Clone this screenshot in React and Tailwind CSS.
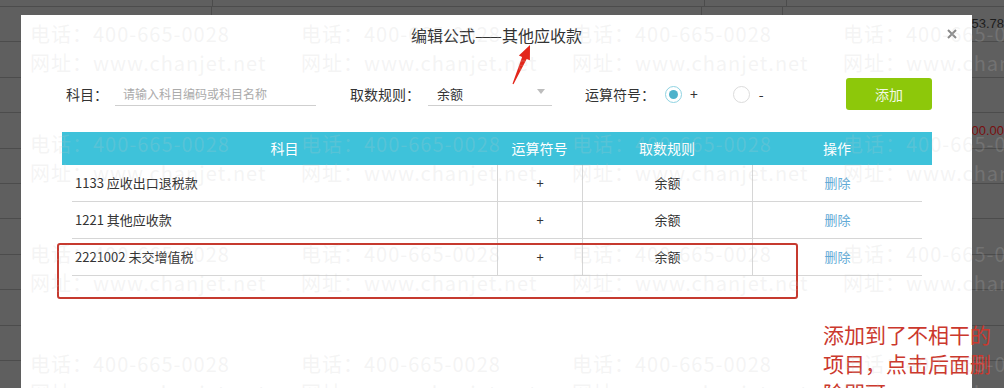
import React from 'react';

const rows = [
  { code: '1133 应收出口退税款', op: '+', rule: '余额' },
  { code: '1221 其他应收款', op: '+', rule: '余额' },
  { code: '2221002 未交增值税', op: '+', rule: '余额' },
];

const sheetRows = Array.from({ length: 11 });

function Sheet() {
  return (
    <div className="flex flex-col">
      <div className="flex h-[7px] border-b border-[#4c4c4c]">
        <div className="w-[213px] border-r border-[#4c4c4c]" />
        <div className="w-[492px] border-r border-[#4c4c4c]" />
        <div className="w-[82px] border-r border-[#4c4c4c]" />
        <div className="flex-1" />
      </div>
      {sheetRows.map((_, i) => (
        <div key={i} className="flex h-[35.4px] border-b border-[#4c4c4c] font-['Liberation_Sans',sans-serif] text-[13px]">
          <div className="w-[213px] border-r border-[#4c4c4c]" />
          <div className="w-[492px] border-r border-[#4c4c4c]" />
          <div className="w-[82px] border-r border-[#4c4c4c]" />
          <div className="flex flex-1 items-center whitespace-nowrap">
            {i === 0 && <span className="pl-[181px] text-[#1c1c1c]">453.78</span>}
            {i === 3 && <span className="pl-[186px] text-[#7a0f0f]">000.00</span>}
          </div>
        </div>
      ))}
    </div>
  );
}

function Radio({ checked }) {
  return (
    <span className={`flex h-[17px] w-[17px] items-center justify-center rounded-full border ${checked ? 'border-[#8fd3e2]' : 'border-[#dcdcdc]'}`}>
      {checked && <span className="h-[9px] w-[9px] rounded-full bg-[#4fb2cb]" />}
    </span>
  );
}

function Watermark() {
  const cells = Array.from({ length: 16 });
  return (
    <div className="pointer-events-none absolute inset-0 grid auto-rows-[110px] grid-cols-[repeat(4,271px)] pl-[30px] pt-[19px] text-[20px] leading-[29px] tracking-[1px] whitespace-nowrap text-[rgba(200,200,200,0.2)]">
      {cells.map((_, i) => (
        <div key={i}>
          <div>电话：400-665-0028</div>
          <div>网址：www.chanjet.net</div>
        </div>
      ))}
    </div>
  );
}

export default function App() {
  return (
    <div className="relative h-[388px] w-[1004px] overflow-hidden bg-[#5f5f5f] font-['Noto_Sans_CJK_SC',sans-serif]">
      <Sheet />

      <div className="absolute left-[21px] top-[15px] h-[380px] w-[951px] bg-white">
        <div className="relative flex h-[40px] items-center justify-center text-[16px] text-[#333]">
          编辑公式——其他应收款
          <button className="absolute right-[15px] top-[14px]">
            <svg width="10" height="10" viewBox="0 0 10 10">
              <path d="M1 1L9 9M9 1L1 9" stroke="#8a8a8a" strokeWidth="2" />
            </svg>
          </button>
        </div>

        <div className="mt-[23px] flex h-[32px] items-center pl-[45px] pr-[40px] text-[14px] text-[#333]">
          <span className="w-[49px]">科目：</span>
          <div className="flex h-[24px] w-[201px] items-center border-b border-[#cfcfcf] pl-[8px] text-[12px] text-[#ababab]">
            请输入科目编码或科目名称
          </div>
          <span className="ml-[34px] w-[78px]">取数规则：</span>
          <div className="flex h-[24px] w-[124px] items-center justify-between border-b border-[#cfcfcf] pl-[9px] pr-[7px] text-[13px]">
            <span>余额</span>
            <svg width="8" height="5" viewBox="0 0 8 5" className="mb-[5px]">
              <path d="M0 0H8L4 5Z" fill="#bdbdbd" />
            </svg>
          </div>
          <span className="ml-[33px] w-[80px]">运算符号：</span>
          <Radio checked />
          <span className="ml-[8px]">+</span>
          <span className="ml-[35px]"><Radio /></span>
          <span className="ml-[9px]">-</span>
          <button className="ml-auto h-[32px] w-[86px] rounded-[3px] bg-[#8dc80a] text-[14px] text-[#f2f9e4]">添加</button>
        </div>

        <div className="ml-[41px] mt-[22px] w-[870px]">
          <div className="grid h-[33px] grid-cols-[425px_85px_170px_170px] items-center bg-[#3ec2da] px-[10px] text-center text-[14px] text-white">
            <span>科目</span>
            <span>运算符号</span>
            <span>取数规则</span>
            <span>操作</span>
          </div>
          <div className="mx-[10px]">
            {rows.map((r) => (
              <div key={r.code} className="grid h-[37px] grid-cols-[425px_85px_170px_170px] border-b border-[#d6d6d6] text-[13px] text-[#333]">
                <div className="flex items-center pl-[3px]">{r.code}</div>
                <div className="flex items-center justify-center border-l border-[#d6d6d6]">{r.op}</div>
                <div className="flex items-center justify-center border-l border-[#d6d6d6]">{r.rule}</div>
                <div className="flex items-center justify-center border-l border-[#d6d6d6] text-[#62aad6]">删除</div>
              </div>
            ))}
          </div>
        </div>
      </div>

      {/* annotations */}
      <div className="absolute left-[57px] top-[243px] h-[56px] w-[741px] rounded-[3px] border-2 border-[#c63a2f]" />
      <svg className="absolute left-[505px] top-[40px]" width="35" height="50" viewBox="0 0 35 50">
        <polygon points="25,5 24.9,20.3 21.7,18.9 8.5,44.2 7.5,43.8 17.1,16.9 13.9,15.5" fill="#e3261b" />
      </svg>
      <div className="absolute left-[823px] top-[320px] whitespace-nowrap text-[21px] leading-[29px] text-[#cb382d]">
        添加到了不相干的<br />项目，点击后面删<br />除即可
      </div>

      <Watermark />
    </div>
  );
}
